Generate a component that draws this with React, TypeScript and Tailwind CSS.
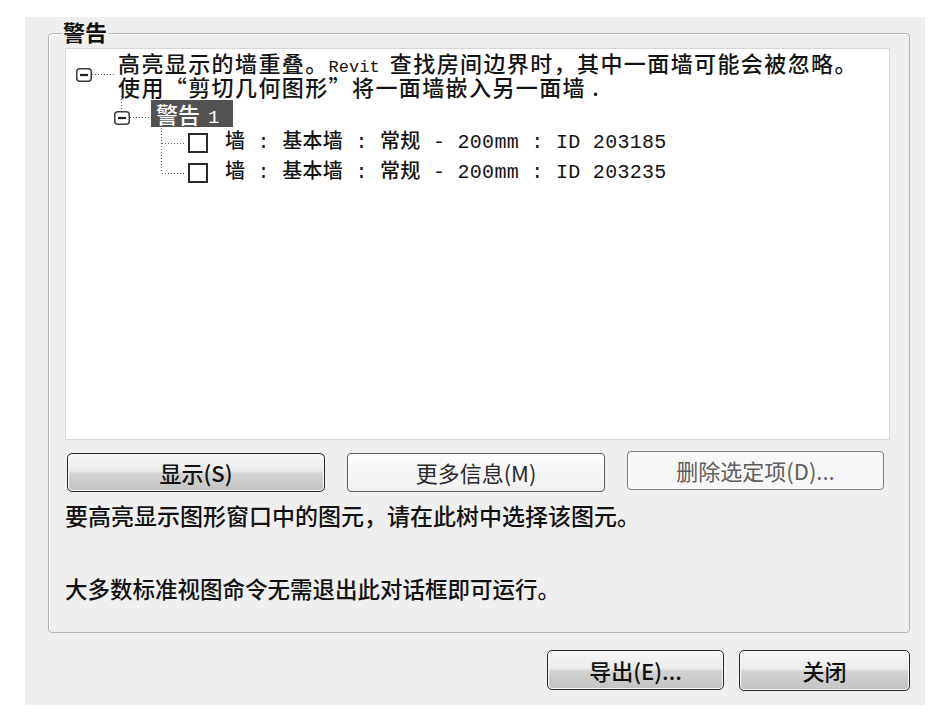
import React from "react";

const cjk = { fontFamily: '"Noto Sans CJK SC", "Liberation Sans", sans-serif' };
const mono = { fontFamily: '"Liberation Mono", "Noto Sans CJK SC", monospace' };

function Minus({ x, y }: { x: number; y: number }) {
  return (
    <g>
      <rect x={x + 0.75} y={y + 0.75} width={14.5} height={12.5} rx={3} fill="#fff" stroke="#3c3c3c" strokeWidth={1.5} />
      <line x1={x + 4} y1={y + 7} x2={x + 12} y2={y + 7} stroke="#1c1c1c" strokeWidth={2.2} />
    </g>
  );
}

const dot = { stroke: "#5e5e5e", strokeWidth: 1.2, strokeDasharray: "1 2" };

function WallRow({ id, last }: { id: string; last?: boolean }) {
  return (
    <div className="flex h-[30px] items-center">
      <svg width={120} height={30} className="shrink-0">
        <line x1={95.5} y1={0} x2={95.5} y2={last ? 15 : 30} {...dot} />
        <line x1={96} y1={15.5} x2={120} y2={15.5} {...dot} />
      </svg>
      <div className="ml-[2px] h-[20px] w-[20px] shrink-0 border-2 border-[#2a2a2a] bg-white" />
      <span
        className="ml-[17px] whitespace-pre text-[20px] font-medium leading-[30px] tracking-[0.3px] text-[#141414]"
        style={mono}
      >
        {`墙 : 基本墙 : 常规 - 200mm : ID ${id}`}
      </span>
    </div>
  );
}

const primaryBtn =
  "flex items-center justify-center rounded-[5px] border-[1.5px] border-[#2a2a2a] bg-[linear-gradient(to_bottom,#f8f8f8_0%,#ebebeb_46%,#d4d4d4_52%,#c3c3c3_100%)] shadow-[inset_0_0_0_1px_#f4f4f4] text-[22px] font-medium text-[#111]";

export default function App() {
  return (
    <div className="h-[721px] w-[936px] bg-white pl-[25px] pt-[17px]" style={cjk}>
      <div className="flex h-[688px] w-[900px] flex-col bg-[#efefef] pl-[23px] pt-[16px]">
        <div className="relative h-[600px] w-[862px] rounded-[4px] border border-[#b4b4b4] pl-[16px] pt-[14px] shadow-[inset_1px_1px_0_#ffffff]">
          <span className="absolute left-[13px] top-[-16px] bg-[#efefef] px-[1px] text-[22px] font-bold leading-[26px] text-[#111]">
            警告
          </span>

          <div className="h-[392px] w-[825px] border border-[#d6d6d6] bg-white">
            <div className="flex h-[47px]">
              <svg width={52} height={47} className="shrink-0">
                <Minus x={10} y={19} />
                <line x1={26} y1={25.5} x2={49} y2={25.5} {...dot} />
              </svg>
              <div className="pt-[4px] text-[22px] font-medium leading-[19px] tracking-[1.4px] text-[#141414]">
                <div className="whitespace-pre">
                  高亮显示的墙重叠。
                  <span className="text-[17px] tracking-normal" style={mono}>
                    Revit{" "}
                  </span>
                  查找房间边界时，其中一面墙可能会被忽略。
                </div>
                <div className="whitespace-pre">使用“剪切几何图形”将一面墙嵌入另一面墙 .</div>
              </div>
            </div>
            <div className="flex h-[32px] items-start">
              <svg width={85} height={32} className="shrink-0">
                <line x1={55.5} y1={0} x2={55.5} y2={15} {...dot} />
                <Minus x={48} y={15} />
                <line x1={64} y1={21.5} x2={85} y2={21.5} {...dot} />
              </svg>
              <span className="mt-[4px] block h-[27px] w-[82px] whitespace-pre bg-[#525252] pl-[5px] text-[22px] font-medium leading-[27px] text-white">
                警告
                <span className="ml-[8px] text-[19px]" style={mono}>
                  1
                </span>
              </span>
            </div>
            <WallRow id="203185" />
            <WallRow id="203235" last />
          </div>

          <div className="ml-[2px] mt-[13px] flex gap-[22px]">
            <button className={`${primaryBtn} h-[39px] w-[258px]`}>显示(S)</button>
            <button className="flex h-[39px] w-[258px] items-center justify-center rounded-[4px] border border-[#5e5e5e] bg-[linear-gradient(to_bottom,#fdfdfd,#f0f0f0)] text-[22px] text-[#2a2a2a]">
              更多信息(M)
            </button>
            <button className="-mt-[2px] flex h-[39px] w-[257px] items-center justify-center rounded-[4px] border border-[#7e7e7e] bg-[#f7f7f7] text-[22px] text-[#5e5e5e]">
              删除选定项(D)...
            </button>
          </div>

          <div className="mt-[9px] text-[23px] font-medium leading-[28px] text-[#111]">
            要高亮显示图形窗口中的图元，请在此树中选择该图元。
          </div>
          <div className="mt-[45px] text-[22.5px] font-medium leading-[28px] text-[#111]">
            大多数标准视图命令无需退出此对话框即可运行。
          </div>
        </div>

        <div className="mt-[17px] flex justify-end gap-[15px] pr-[15px]">
          <button className={`${primaryBtn} h-[40px] w-[177px]`}>导出(E)...</button>
          <button className={`${primaryBtn} h-[41px] w-[171px]`}>关闭</button>
        </div>
      </div>
    </div>
  );
}
